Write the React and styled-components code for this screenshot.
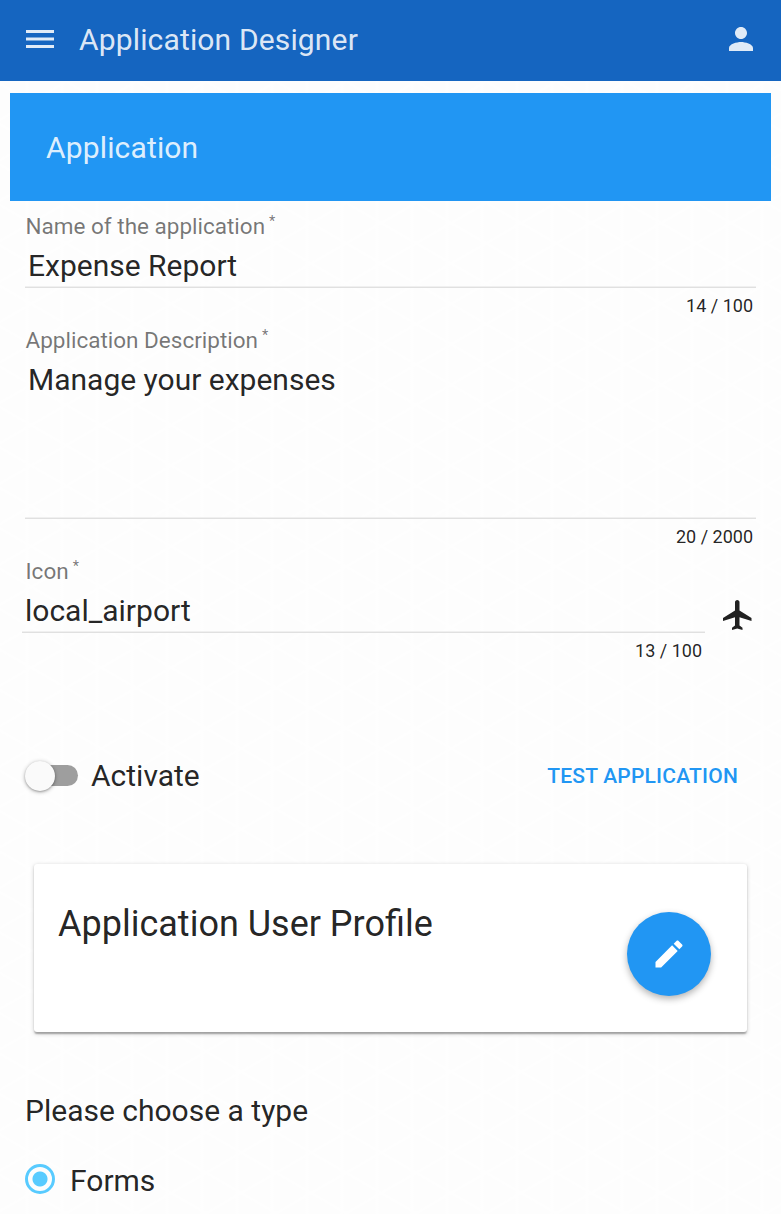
import React from "react";
import styled, { createGlobalStyle } from "styled-components";

const GlobalStyle = createGlobalStyle`
  *, *::before, *::after { box-sizing: border-box; }
  html, body { margin: 0; padding: 0; height: 100%; overflow: hidden; }
  body {
    font-family: Roboto, "Liberation Sans", sans-serif;
    font-size: 30px;
    line-height: 36px;
    color: rgba(0, 0, 0, 0.87);
    background-color: #fdfdfd;
    background-image:
      repeating-linear-gradient(90deg, transparent 0 25px, #fefefe 26px 28px, transparent 29px 35px),
      repeating-linear-gradient(30deg, transparent 0 32px, #fefefe 33px 35px),
      repeating-linear-gradient(150deg, transparent 0 32px, #fefefe 33px 35px);
  }
`;

const Page = styled.div`
  display: flex;
  flex-direction: column;
  width: 781px;
  height: 1214px;
  overflow: hidden;
`;

const Toolbar = styled.header`
  display: flex;
  align-items: center;
  flex: none;
  height: 81px;
  padding: 0 22px 3px;
  background: #1565c0;
  color: rgba(255, 255, 255, 0.87);
`;

const ToolbarTitle = styled.h1`
  flex: 1;
  margin: 0 0 0 21px;
  padding-top: 2px;
  font-size: 30px;
  font-weight: 400;
  letter-spacing: 0.15px;
`;

const Glyph = styled.svg`
  display: block;
  flex: none;
  width: 36px;
  height: 36px;
  fill: currentColor;
`;

const Banner = styled.div`
  display: flex;
  align-items: center;
  flex: none;
  height: 108px;
  margin: 12px 10px 0;
  padding: 1px 36px 0;
  background: #2196f3;
  color: rgba(255, 255, 255, 0.87);
  letter-spacing: 0.15px;
`;

const Form = styled.form`
  display: flex;
  flex-direction: column;
  padding: 8px 25px 0;
`;

const Field = styled.div`
  display: flex;
  flex-direction: column;
  flex: ${(p) => (p.$grow ? "1" : "none")};
  height: ${(p) => p.$height}px;
`;

const Label = styled.label`
  display: block;
  height: 34px;
  padding-left: ${(p) => p.$inset ?? 0.5}px;
  font-size: 22.5px;
  line-height: 34px;
  color: rgba(0, 0, 0, 0.54);
`;

const Star = styled.span`
  display: inline-block;
  margin-left: 4px;
  padding-top: 6px;
  font-size: 14.5px;
  line-height: 14px;
  vertical-align: top;
`;

const Value = styled.div`
  height: ${(p) => p.$height}px;
  padding: 5px 3px 0;
  line-height: 36px;
  border-bottom: 1px solid #e0e0e0;
  box-shadow: inset 0 -1px 0 #f0f0f0;
`;

const Counter = styled.div`
  padding: 6px 3px 0 0;
  font-size: 18px;
  line-height: 24px;
  text-align: right;
`;

const IconRow = styled.div`
  display: flex;
  align-items: flex-start;
  margin-left: -3px;
`;

const Preview = styled.div`
  margin: 43px 0 0 15px;
`;

const ActionRow = styled.div`
  display: flex;
  align-items: center;
  height: 54px;
  margin-top: 81px;
`;

const Track = styled.span`
  display: flex;
  align-items: center;
  width: 50px;
  height: 21px;
  margin: 0 0 2px 3px;
  border-radius: 11px;
  background: #9e9e9e;
`;

const Thumb = styled.span`
  flex: none;
  width: 30px;
  height: 30px;
  margin: 1px 0 0 -3px;
  border-radius: 50%;
  background: #fafafa;
  box-shadow: 0 1px 4px rgba(0, 0, 0, 0.3), 0 1px 2px rgba(0, 0, 0, 0.2);
`;

const SwitchLabel = styled.span`
  flex: 1;
  margin-left: 13px;
`;

const FlatButton = styled.button`
  border: 0;
  padding: 0 18px;
  background: none;
  color: #2196f3;
  font: 500 21px/54px Roboto, "Liberation Sans", sans-serif;
  letter-spacing: 0.21px;
  text-transform: uppercase;
`;

const Card = styled.section`
  display: flex;
  justify-content: space-between;
  height: 168px;
  margin: 61px 9px 0;
  padding: 38px 36px 0 24px;
  border-radius: 3px;
  background: #fff;
  box-shadow: 0 1.5px 4.5px rgba(0, 0, 0, 0.2), 0 1.5px 1.5px rgba(0, 0, 0, 0.14),
    0 3px 1.5px -1.5px rgba(0, 0, 0, 0.12);
`;

const CardTitle = styled.h2`
  margin: 0;
  font-size: 36px;
  font-weight: 400;
  line-height: 44px;
`;

const RoundButton = styled.button`
  display: flex;
  align-items: center;
  justify-content: center;
  width: 84px;
  height: 84px;
  margin-top: 10px;
  padding: 0;
  border: 0;
  border-radius: 50%;
  background: #2196f3;
  color: #fff;
  box-shadow: 0 3px 7px rgba(0, 0, 0, 0.3);
`;

const Prompt = styled.p`
  margin: 61px 0 0;
`;

const RadioRow = styled.label`
  display: flex;
  align-items: center;
  margin-top: 34px;
`;

const RadioMark = styled.span`
  width: 30px;
  height: 30px;
  margin: -5px 15px 0 0;
  border: 3px solid #58cbff;
  border-radius: 50%;
  background: radial-gradient(circle, #58cbff 7px, transparent 8px);
`;

function TextField({ label, value, count, height, boxHeight, inset, grow }) {
  return (
    <Field $height={height} $grow={grow}>
      <Label $inset={inset}>
        {label}
        <Star>*</Star>
      </Label>
      <Value $height={boxHeight}>{value}</Value>
      <Counter>{count}</Counter>
    </Field>
  );
}

export default function App() {
  return (
    <Page>
      <GlobalStyle />
      <Toolbar>
        <Glyph viewBox="0 0 36 36">
          <path d="M4 9h28v3H4zM4 16.5h28v3H4zM4 24h28v3H4z" />
        </Glyph>
        <ToolbarTitle>Application Designer</ToolbarTitle>
        <Glyph viewBox="0 0 24 24">
          <path d="M12 12c2.21 0 4-1.79 4-4s-1.79-4-4-4-4 1.79-4 4 1.79 4 4 4zm0 2c-2.67 0-8 1.34-8 4v2h16v-2c0-2.66-5.33-4-8-4z" />
        </Glyph>
      </Toolbar>
      <Banner>Application</Banner>
      <Form>
        <TextField
          label="Name of the application"
          value="Expense Report"
          count="14 / 100"
          height={114}
          boxHeight={45}
        />
        <TextField
          label="Application Description"
          value="Manage your expenses"
          count="20 / 2000"
          height={231}
          boxHeight={162}
        />
        <IconRow>
          <TextField
            label="Icon"
            value="local_airport"
            count="13 / 100"
            height={114}
            boxHeight={45}
            inset={3.5}
            grow
          />
          <Preview>
            <Glyph viewBox="0 0 24 24">
              <path d="M21 16v-2l-8-5V3.5c0-.83-.67-1.5-1.5-1.5S10 2.67 10 3.5V9l-8 5v2l8-2.5V19l-2 1.5V22l3.5-1 3.5 1v-1.5L13 19v-5.5l8 2.5z" />
            </Glyph>
          </Preview>
        </IconRow>
        <ActionRow>
          <Track>
            <Thumb />
          </Track>
          <SwitchLabel>Activate</SwitchLabel>
          <FlatButton type="button">Test application</FlatButton>
        </ActionRow>
        <Card>
          <CardTitle>Application User Profile</CardTitle>
          <RoundButton type="button" aria-label="Edit">
            <Glyph viewBox="0 0 24 24">
              <path d="M3 17.25V21h3.75L17.81 9.94l-3.75-3.75L3 17.25zM20.71 7.04c.39-.39.39-1.02 0-1.41l-2.34-2.34c-.39-.39-1.02-.39-1.41 0l-1.83 1.83 3.75 3.75 1.83-1.83z" />
            </Glyph>
          </RoundButton>
        </Card>
        <Prompt>Please choose a type</Prompt>
        <RadioRow>
          <RadioMark />
          Forms
        </RadioRow>
      </Form>
    </Page>
  );
}
